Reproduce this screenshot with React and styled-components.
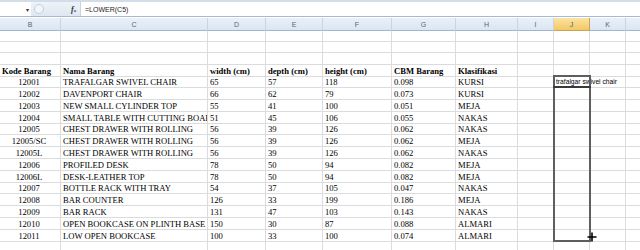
import React from 'react';
import styled, { createGlobalStyle } from 'styled-components';

const GlobalStyle = createGlobalStyle`
  html, body {
    margin: 0;
    padding: 0;
    background: #ffffff;
    overflow: hidden;
  }
  body {
    width: 640px;
    height: 250px;
  }
`;

const COLS = [61, 147, 58, 57, 69, 64, 62, 36, 36, 36, 40];
// L is scrolled past the window edge, its letter is not visible
const LETTERS = ['B', 'C', 'D', 'E', 'F', 'G', 'H', 'I', 'J', 'K', ''];
const ROW_H = [11, 11, 12, 12, 11, 12, 12, 12, 11, 12, 12, 12, 12, 11, 12, 12, 12, 12, 11];
const TEMPLATE = COLS.map((c) => `${c}px`).join(' ');

const HEAD = ['Kode Barang', 'Nama Barang', 'width (cm)', 'depth (cm)', 'height (cm)', 'CBM Barang', 'Klasifikasi'];

const DATA = [
  ['12001', 'TRAFALGAR SWIVEL CHAIR', '65', '57', '118', '0.098', 'KURSI'],
  ['12002', 'DAVENPORT CHAIR', '66', '62', '79', '0.073', 'KURSI'],
  ['12003', 'NEW SMALL CYLINDER TOP', '55', '41', '100', '0.051', 'MEJA'],
  ['12004', 'SMALL TABLE WITH CUTTING BOARD', '51', '45', '106', '0.055', 'NAKAS'],
  ['12005', 'CHEST DRAWER WITH ROLLING', '56', '39', '126', '0.062', 'NAKAS'],
  ['12005/SC', 'CHEST DRAWER WITH ROLLING', '56', '39', '126', '0.062', 'MEJA'],
  ['12005L', 'CHEST DRAWER WITH ROLLING', '56', '39', '126', '0.062', 'NAKAS'],
  ['12006', 'PROFILED DESK', '78', '50', '94', '0.082', 'MEJA'],
  ['12006L', 'DESK-LEATHER TOP', '78', '50', '94', '0.082', 'MEJA'],
  ['12007', 'BOTTLE RACK WITH TRAY', '54', '37', '105', '0.047', 'NAKAS'],
  ['12008', 'BAR COUNTER', '126', '33', '199', '0.186', 'MEJA'],
  ['12009', 'BAR RACK', '131', '47', '103', '0.143', 'NAKAS'],
  ['12010', 'OPEN BOOKCASE ON PLINTH BASE', '150', '30', '87', '0.088', 'ALMARI'],
  ['12011', 'LOW OPEN BOOKCASE', '100', '33', '100', '0.074', 'ALMARI'],
];

const Window = styled.div`
  width: 640px;
  height: 250px;
  overflow: hidden;
  display: flex;
  flex-direction: column;
`;

const RibbonEdge = styled.div`
  height: 2px;
  background: #d3dde9;
  flex-shrink: 0;
`;

const FormulaBar = styled.div`
  height: 14px;
  display: flex;
  border-bottom: 1px solid #a9b9cc;
  margin-bottom: 1px;
  flex-shrink: 0;
`;

const NameBox = styled.div`
  width: 31px;
  background: #ffffff;
  display: flex;
  align-items: center;
  justify-content: flex-end;
  padding-right: 2px;
  box-sizing: border-box;
  font-size: 6px;
  color: #333;
  font-family: 'Liberation Sans', sans-serif;
`;

const Splitter = styled.div`
  width: 49px;
  background: linear-gradient(#eef3f9, #dfe7f1);
  display: flex;
  align-items: center;
  padding-left: 3px;
  box-sizing: border-box;
`;

const ExpandPill = styled.div`
  width: 10px;
  height: 10px;
  border-radius: 6px;
  border: 1px solid #c4cfdc;
  background: #f2f5f9;
  box-sizing: border-box;
`;

const Fx = styled.span`
  margin-left: 27px;
  font-family: 'Liberation Serif', serif;
  font-style: italic;
  font-weight: bold;
  font-size: 8px;
  color: #333;
  & sub {
    font-size: 5px;
    vertical-align: baseline;
  }
`;

const FormulaInput = styled.div`
  flex: 1;
  background: #ffffff;
  border-left: 1px solid #c8d3e0;
  padding-left: 4px;
  display: flex;
  align-items: center;
  font-family: 'Liberation Sans', sans-serif;
  font-size: 7px;
  color: #1e1e1e;
`;

const Sheet = styled.div`
  position: relative;
  flex: 1;
`;

const Row = styled.div`
  display: grid;
  grid-template-columns: ${TEMPLATE};
  height: ${(p) => p.$h}px;
`;

const ColHead = styled.div`
  box-sizing: border-box;
  border-right: 1px solid ${(p) => (p.$active ? '#c9a552' : '#c7d4e4')};
  border-bottom: 1px solid ${(p) => (p.$active ? '#c9a552' : '#9eb6ce')};
  background: ${(p) =>
    p.$active ? 'linear-gradient(#fbe3a2, #f3c866)' : 'linear-gradient(#eaf0f8, #dbe5f2)'};
  display: flex;
  align-items: center;
  justify-content: center;
  font-family: 'Liberation Sans', sans-serif;
  font-size: 7px;
  color: #53667d;
`;

const Cell = styled.div`
  box-sizing: border-box;
  border-right: 1px solid #dadcdd;
  border-bottom: 1px solid #dadcdd;
  padding: 0 2px 0 ${(p) => (p.$align === 'center' ? 0 : 2)}px;
  display: flex;
  align-items: flex-end;
  justify-content: ${(p) => (p.$align === 'center' ? 'center' : 'flex-start')};
  white-space: nowrap;
  overflow: ${(p) => (p.$spill ? 'visible' : 'hidden')};
  font-family: ${(p) => (p.$sans ? "'Liberation Sans', sans-serif" : "'Liberation Serif', serif")};
  font-size: ${(p) => (p.$sans ? 6.7 : 8.6)}px;
  font-weight: ${(p) => (p.$bold ? 'bold' : 'normal')};
  line-height: 10px;
  color: #000;
  min-width: 0;
`;

const Selection = styled.div`
  position: absolute;
  left: 553px;
  top: 57px;
  width: 38px;
  height: 167px;
  border: 2px solid #5e5e5e;
  box-sizing: border-box;
  pointer-events: none;
`;

const ActiveLine = styled.div`
  position: absolute;
  left: 553px;
  top: 68px;
  width: 38px;
  height: 2px;
  background: #3a3a3a;
`;

const Cursor = styled.svg`
  position: absolute;
  left: 587px;
  top: 214px;
`;

function DataRow({ h, values, isHead, first }) {
  const cells = [];
  for (let i = 0; i < COLS.length; i++) {
    let text = '';
    if (values && i < 7) text = values[i];
    if (first && i === 8) text = 'trafalgar swivel chair';
    cells.push(
      <Cell
        key={i}
        $align={i === 0 && !isHead ? 'center' : 'left'}
        $bold={isHead}
        $sans={first && i === 8}
        $spill={first && i === 8}
      >
        {text}
      </Cell>
    );
  }
  return <Row $h={h}>{cells}</Row>;
}

export default function App() {
  return (
    <Window>
      <GlobalStyle />
      <RibbonEdge />
      <FormulaBar>
        <NameBox>▾</NameBox>
        <Splitter>
          <ExpandPill />
          <Fx>
            f<sub>x</sub>
          </Fx>
        </Splitter>
        <FormulaInput>=LOWER(C5)</FormulaInput>
      </FormulaBar>
      <Sheet>
        <Row $h={13}>
          {LETTERS.map((l, i) => (
            <ColHead key={i} $active={l === 'J'}>
              {l}
            </ColHead>
          ))}
        </Row>
        {ROW_H.map((h, r) => {
          if (r === 3) return <DataRow key={r} h={h} values={HEAD} isHead />;
          const d = DATA[r - 4];
          return <DataRow key={r} h={h} values={r >= 4 ? d : null} first={r === 4} />;
        })}
        <Selection />
        <ActiveLine />
        <Cursor width="10" height="10" viewBox="0 0 10 10">
          <path d="M5 0.5V9.5M0.5 5H9.5" stroke="#000" strokeWidth="1.6" />
        </Cursor>
      </Sheet>
    </Window>
  );
}
